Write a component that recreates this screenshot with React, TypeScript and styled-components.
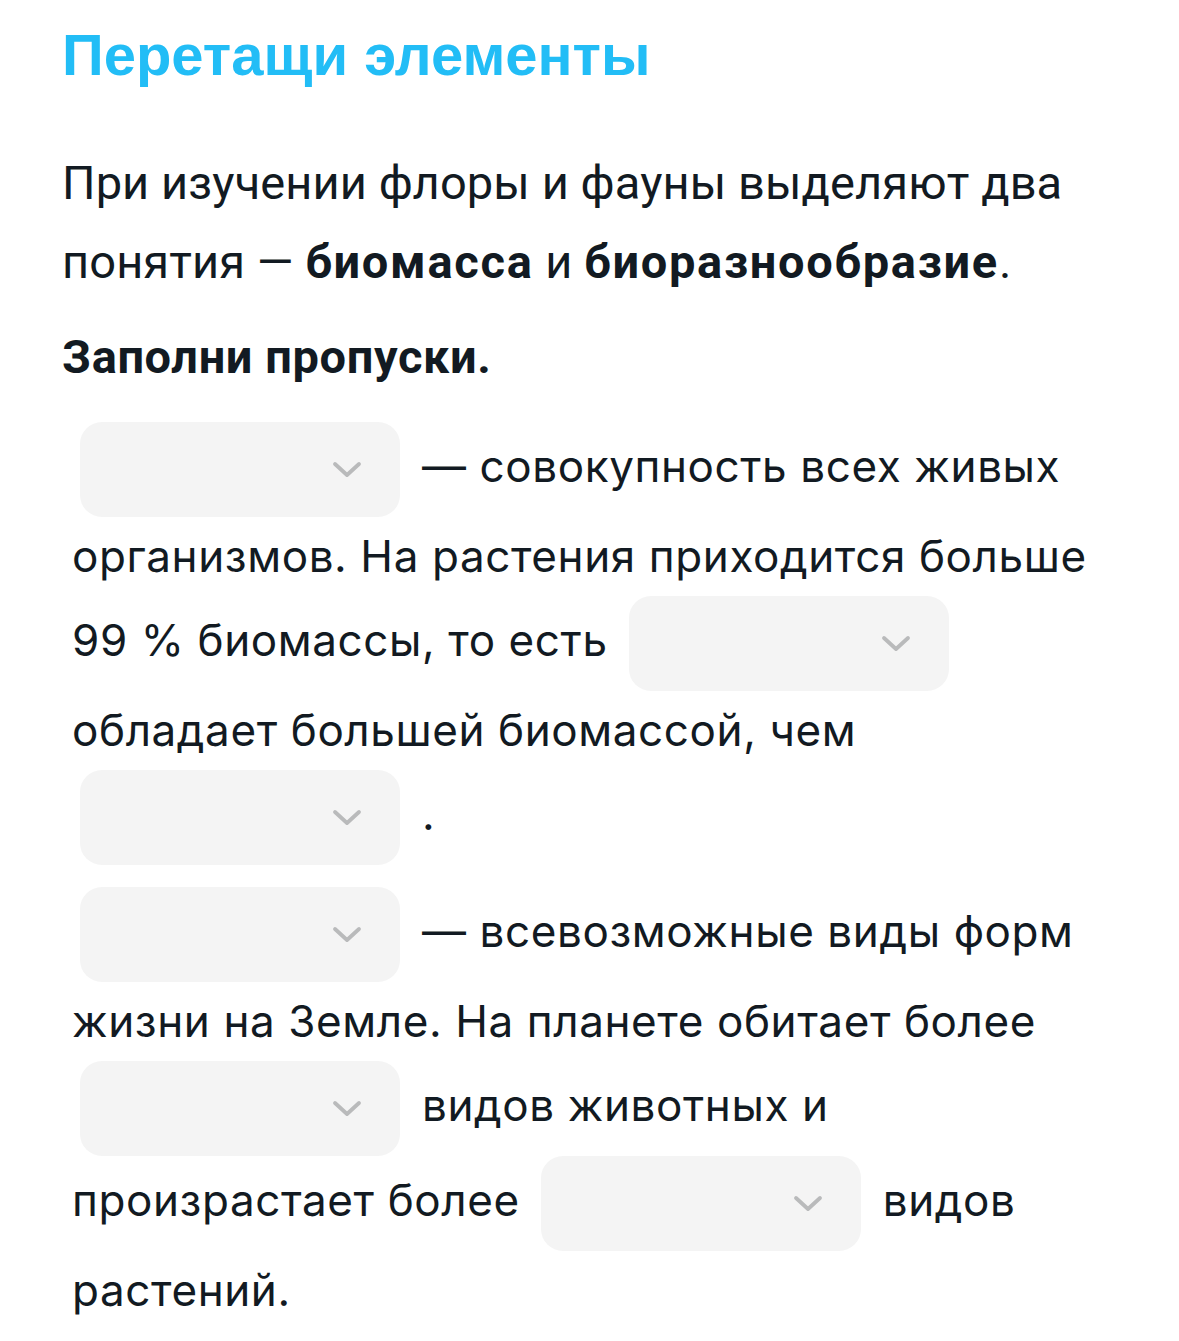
import styled, { createGlobalStyle } from "styled-components";

const GlobalStyle = createGlobalStyle`
  body {
    margin: 0;
    background: #ffffff;
  }
`;

const Page = styled.div`
  padding: 19px 50px 0 62px;
  color: #121a22;
`;

const Title = styled.h1`
  margin: 0;
  font-family: "Liberation Sans", Arial, sans-serif;
  font-weight: 700;
  font-size: 58px;
  line-height: 72px;
  color: #22bdf6;
`;

const Intro = styled.p`
  margin: 52px 0 0;
  font-family: "Roboto", sans-serif;
  font-size: 47px;
  line-height: 79px;
  letter-spacing: 0.1px;
  b {
    font-weight: 700;
    letter-spacing: 1.7px;
  }
`;

const Task = styled.p`
  margin: 16px 0 0;
  font-family: "Roboto", sans-serif;
  font-weight: 700;
  font-size: 47px;
  line-height: 79px;
  letter-spacing: 0.6px;
`;

const Gaps = styled.p`
  margin: 26px 0 0;
  padding-left: 10px;
  font-family: "Inter", "Liberation Sans", sans-serif;
  font-size: 44px;
  line-height: 79px;
  letter-spacing: 0.6px;
  & + & {
    margin-top: 22px;
  }
`;

const Select = styled.span`
  display: inline-flex;
  align-items: center;
  justify-content: flex-end;
  box-sizing: border-box;
  width: 320px;
  height: 95px;
  margin: 0 22px 0 8px;
  padding-right: 36px;
  vertical-align: middle;
  background: #f4f4f4;
  border-radius: 22px;
  svg {
    display: block;
  }
`;

const Chevron = () => (
  <svg width="34" height="20" viewBox="0 0 34 20" fill="none">
    <path d="M5 4l12 11L29 4" stroke="#b9babb" strokeWidth="3.8" strokeLinecap="round" strokeLinejoin="round" />
  </svg>
);

const Gap = () => (
  <Select>
    <Chevron />
  </Select>
);

export default function App() {
  return (
    <Page>
      <GlobalStyle />
      <Title>Перетащи элементы</Title>
      <Intro>
        При изучении флоры и фауны выделяют два понятия — <b>биомасса</b> и <b>биоразнообразие</b>.
      </Intro>
      <Task>Заполни пропуски.</Task>
      <Gaps>
        <Gap />— совокупность всех живых организмов. На растения приходится больше 99 % биомассы, то есть <Gap />
        обладает большей биомассой, чем <Gap />.
      </Gaps>
      <Gaps>
        <Gap />— всевозможные виды форм жизни на Земле. На планете обитает более <Gap />видов животных и
        произрастает более <Gap />видов растений.
      </Gaps>
    </Page>
  );
}
